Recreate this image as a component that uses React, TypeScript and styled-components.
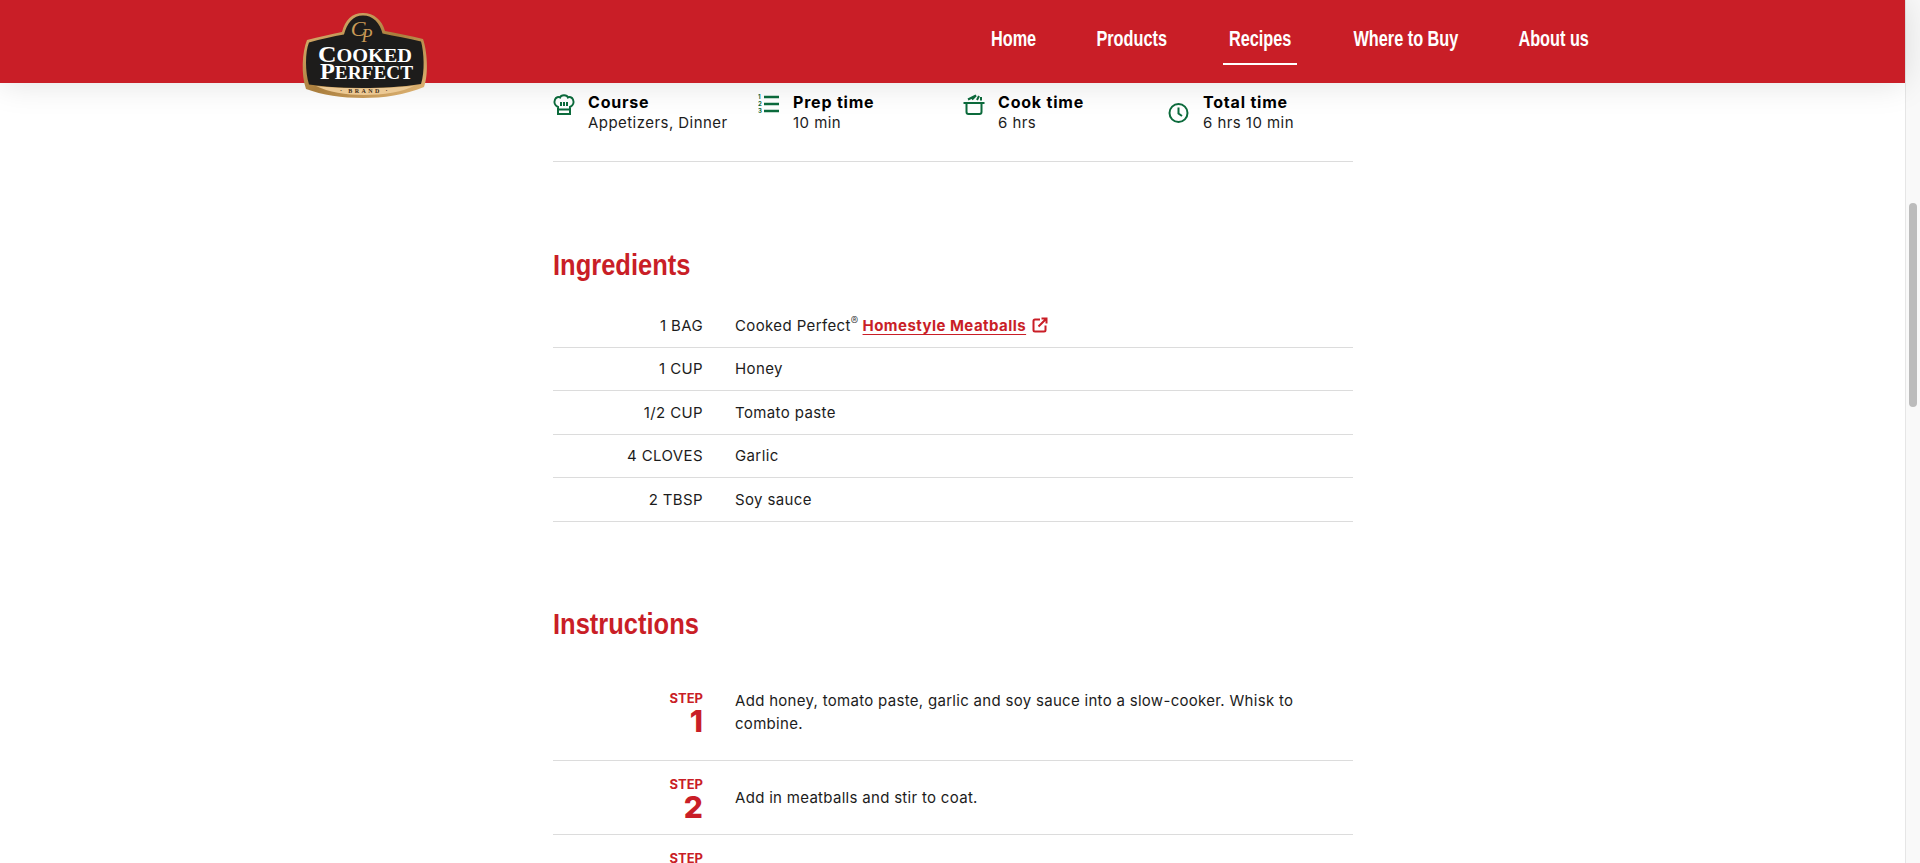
import styled, { createGlobalStyle } from "styled-components"

const RED = "#c91e27"
const GREEN = "#0c6b3c"
const LINE = "#dcdcdc"

const GlobalStyle = createGlobalStyle`
    html, body {
        margin: 0;
        height: 100%;
        overflow: hidden;
        background: #fff;
    }
    body {
        font-family: Inter, "Noto Sans", sans-serif;
        color: #1c1c1c;
    }
`

const Viewport = styled.div`
    display: flex;
    height: 863px;
    overflow: hidden;
`

const Page = styled.div`
    flex: 1;
    min-width: 0;
`

const ScrollTrack = styled.div`
    flex: none;
    width: 15px;
    box-sizing: border-box;
    background: #f9f9f9;
    border-left: 1px solid #e6e6e6;
    padding: 203px 3px 0;
`

const ScrollThumb = styled.div`
    width: 8px;
    height: 204px;
    border-radius: 4px;
    background: #bcbcbc;
`

const Header = styled.header`
    position: relative;
    z-index: 2;
    height: 83px;
    background: ${RED};
    box-shadow: 0 0 34px rgba(0, 0, 0, 0.13);
`

const Logo = styled.svg`
    position: absolute;
    left: 280px;
    top: 0;
    width: 180px;
    height: 110px;
`

const Nav = styled.nav`
    display: flex;
    justify-content: flex-end;
    gap: 50px;
    height: 100%;
    padding-right: 312px;
`

const NavLink = styled.a<{ $active?: boolean; $width: number }>`
    display: flex;
    align-items: center;
    justify-content: center;
    box-sizing: border-box;
    width: ${(p) => p.$width}px;
    height: 65px;
    padding-top: 15px;
    border-bottom: 2px solid ${(p) => (p.$active ? "#fff" : "transparent")};
    color: #fff;
    font-family: "Liberation Sans", sans-serif;
    font-size: 22px;
    font-weight: 700;
    white-space: nowrap;
`

const NavLabel = styled.span`
    display: block;
    flex: none;
    transform: scaleX(0.74);
`

const Content = styled.main`
    width: 800px;
    margin-left: 553px;
`

const InfoRow = styled.div`
    display: grid;
    grid-template-columns: repeat(4, 205px);
    height: 78px;
    border-bottom: 1px solid ${LINE};
`

const InfoItem = styled.div`
    display: flex;
    gap: 13px;
    padding-top: 9px;
`

const InfoIcon = styled.svg<{ $drop?: number }>`
    flex: none;
    width: 22px;
    height: 22px;
    margin-top: ${(p) => 1 + (p.$drop ?? 0)}px;
    fill: none;
    stroke: ${GREEN};
    stroke-width: 2;
`

const InfoTitle = styled.div`
    color: #000;
    font-size: 16px;
    font-weight: 700;
    line-height: 20px;
    letter-spacing: 0.8px;
`

const InfoValue = styled.div`
    font-size: 15px;
    line-height: 21px;
    letter-spacing: 0.45px;
`

const Heading = styled.h2`
    margin: 0;
    color: ${RED};
    font-family: "Liberation Sans", sans-serif;
    font-size: 30px;
    line-height: 40px;
    font-weight: 700;
    transform: scaleX(0.85);
    transform-origin: left center;
`

const IngredientsHeading = styled(Heading)`
    margin-top: 83px;
    margin-bottom: 19px;
`

const InstructionsHeading = styled(Heading)`
    margin-top: 82px;
    margin-bottom: 31px;
`

const IngredientRow = styled.div`
    display: grid;
    grid-template-columns: 150px 1fr;
    column-gap: 32px;
    align-items: center;
    height: 43.5px;
    box-sizing: border-box;
    border-bottom: 1px solid ${LINE};
    font-size: 15px;
    letter-spacing: 0.38px;
`

const Qty = styled.div`
    text-align: right;
`

const Reg = styled.sup`
    font-size: 11px;
    font-weight: 300;
    line-height: 0;
`

const ProductLink = styled.a`
    margin-left: 4px;
    color: ${RED};
    font-weight: 700;
    letter-spacing: 0.45px;
    text-decoration: underline;
    text-underline-offset: 3px;
`

const LinkIcon = styled.svg`
    width: 16px;
    height: 16px;
    margin-left: 6px;
    vertical-align: -2px;
    fill: none;
    stroke: ${RED};
    stroke-width: 2;
`

const StepRow = styled.div<{ $height: number; $textTop: number }>`
    display: grid;
    grid-template-columns: 150px 1fr;
    column-gap: 32px;
    height: ${(p) => p.$height}px;
    box-sizing: border-box;
    border-bottom: 1px solid ${LINE};
    padding-top: 14px;
    & > p {
        margin: ${(p) => p.$textTop}px 0 0;
    }
`

const StepLabel = styled.div`
    padding-top: 1px;
    text-align: right;
    color: ${RED};
    font-weight: 700;
`

const StepWord = styled.div`
    font-size: 13px;
    line-height: 16px;
`

const StepNum = styled.div`
    font-size: 30px;
    line-height: 30px;
    font-weight: 800;
`

const StepText = styled.p`
    font-size: 15px;
    line-height: 23px;
    letter-spacing: 0.3px;
`

const ingredients: [string, string][] = [
    ["1 CUP", "Honey"],
    ["1/2 CUP", "Tomato paste"],
    ["4 CLOVES", "Garlic"],
    ["2 TBSP", "Soy sauce"],
]

const navItems: [string, number][] = [
    ["Home", 55],
    ["Products", 82],
    ["Recipes", 74],
    ["Where to Buy", 117],
    ["About us", 79],
]

const App = (): React.JSX.Element => {
    return (
        <Viewport>
            <GlobalStyle />
            <Page>
                <Header>
                    <Nav>
                        {navItems.map(([label, width]) => (
                            <NavLink key={label} $width={width} $active={label === "Recipes"}>
                                <NavLabel>{label}</NavLabel>
                            </NavLink>
                        ))}
                    </Nav>
                    <Logo viewBox="0 0 180 110">
                        <defs>
                            <linearGradient id="gold" x1="0" y1="0" x2="1" y2="1">
                                <stop offset="0" stopColor="#e6bd7c" />
                                <stop offset="0.5" stopColor="#a97d3c" />
                                <stop offset="1" stopColor="#e3b878" />
                            </linearGradient>
                        </defs>
                        <path
                            d="M83 13C94 13 102 20 105 31C117 33 131 36 143 39C147 50 149 74 144 87C125 95 103 98 83 98C62 98 42 95 26 89C21 75 22 52 27 40C39 37 51 34 62 32C65 20 72 13 83 13Z"
                            fill="url(#gold)"
                        />
                        <path
                            d="M83 15.500C93 15.500 100 23 102.500 33.500C115 36 128 38.500 141 41.500C144 52 145 72 141 84C122 87 100 88 83 88C63 88 45 87 29 84.500C25 72 25 52 29 42.500C41 39 53 36.500 64 34.500C67 23 73 15.500 83 15.500Z"
                            fill="#1d1c1b"
                        />
                        <path
                            d="M36 86C62 89 104 89 134 86C122 92 104 95 84 95C66 95 48 92 36 86Z"
                            fill="#ecc994"
                        />
                        <text x="78" y="36" textAnchor="middle" fontFamily="Liberation Serif" fontStyle="italic" fontSize="22" fill="#c99a56">
                            C
                        </text>
                        <text x="87" y="42" textAnchor="middle" fontFamily="Liberation Serif" fontStyle="italic" fontSize="18" fill="#c99a56">
                            P
                        </text>
                        <text x="38" y="62" textLength="94" lengthAdjust="spacingAndGlyphs" fontFamily="Liberation Serif" fontWeight="700" fontSize="19" fill="#fff">
                            <tspan fontSize="24">C</tspan>OOKED
                        </text>
                        <text x="40" y="79" textLength="93" lengthAdjust="spacingAndGlyphs" fontFamily="Liberation Serif" fontWeight="700" fontSize="19" fill="#fff">
                            <tspan fontSize="24">P</tspan>ERFECT
                        </text>
                        <text x="85" y="93" textAnchor="middle" fontFamily="Liberation Serif" fontWeight="700" fontSize="6" letterSpacing="2.400" fill="#3a2a14">
                            · BRAND ·
                        </text>
                    </Logo>
                </Header>
                <Content>
                    <InfoRow>
                        <InfoItem>
                            <InfoIcon viewBox="0 0 22 22">
                                <path d="M5 14C1.500 12.500 1 9 2 6.500C3 4 5.500 3.500 7 4.500C8 1.500 14 1.500 15 4.500C16.500 3.500 19 4 20 6.500C21 9 20.500 12.500 17 14V21H5Z" />
                                <path d="M5 16.500H17M8 9V13M11 9V13M14 9V13" />
                            </InfoIcon>
                            <div>
                                <InfoTitle>Course</InfoTitle>
                                <InfoValue>Appetizers, Dinner</InfoValue>
                            </div>
                        </InfoItem>
                        <InfoItem>
                            <InfoIcon viewBox="0 0 22 22">
                                <path d="M6 4H21M6 11H21M6 18H21" strokeWidth="2.500" />
                                <text x="0" y="6" fontSize="6" fontWeight="700" fill={GREEN} stroke="none">1</text>
                                <text x="0" y="13" fontSize="6" fontWeight="700" fill={GREEN} stroke="none">2</text>
                                <text x="0" y="20" fontSize="6" fontWeight="700" fill={GREEN} stroke="none">3</text>
                            </InfoIcon>
                            <div>
                                <InfoTitle>Prep time</InfoTitle>
                                <InfoValue>10 min</InfoValue>
                            </div>
                        </InfoItem>
                        <InfoItem>
                            <InfoIcon viewBox="0 0 22 22">
                                <path d="M3.500 10H18.500V19C18.500 20 17.500 21 16.500 21H5.500C4.500 21 3.500 20 3.500 19ZM0.500 10H21.500" />
                                <path d="M5 6.500L13 2.500L9 6.500M14 7L16 3M18 7.500V4" />
                            </InfoIcon>
                            <div>
                                <InfoTitle>Cook time</InfoTitle>
                                <InfoValue>6 hrs</InfoValue>
                            </div>
                        </InfoItem>
                        <InfoItem>
                            <InfoIcon viewBox="0 0 22 22" $drop={9}>
                                <circle cx="10.500" cy="11" r="9" />
                                <path d="M10.500 5.500V11.500L14 14" />
                            </InfoIcon>
                            <div>
                                <InfoTitle>Total time</InfoTitle>
                                <InfoValue>6 hrs 10 min</InfoValue>
                            </div>
                        </InfoItem>
                    </InfoRow>

                    <IngredientsHeading>Ingredients</IngredientsHeading>
                    <IngredientRow>
                        <Qty>1 BAG</Qty>
                        <div>
                            Cooked Perfect<Reg>®</Reg>
                            <ProductLink>Homestyle Meatballs</ProductLink>
                            <LinkIcon viewBox="0 0 16 16">
                                <path d="M8 2.500H3C2 2.500 1.500 3 1.500 4V13C1.500 14 2 14.500 3 14.500H12C13 14.500 13.500 14 13.500 13V8.500M6.500 9.500L14.500 1.500M9.500 1.500H14.500V6.500" />
                            </LinkIcon>
                        </div>
                    </IngredientRow>
                    {ingredients.map(([qty, name]) => (
                        <IngredientRow key={name}>
                            <Qty>{qty}</Qty>
                            <div>{name}</div>
                        </IngredientRow>
                    ))}

                    <InstructionsHeading>Instructions</InstructionsHeading>
                    <StepRow $height={86} $textTop={0}>
                        <StepLabel>
                            <StepWord>STEP</StepWord>
                            <StepNum>1</StepNum>
                        </StepLabel>
                        <StepText>
                            Add honey, tomato paste, garlic and soy sauce into a slow-cooker. Whisk to combine.
                        </StepText>
                    </StepRow>
                    <StepRow $height={74} $textTop={11}>
                        <StepLabel>
                            <StepWord>STEP</StepWord>
                            <StepNum>2</StepNum>
                        </StepLabel>
                        <StepText>Add in meatballs and stir to coat.</StepText>
                    </StepRow>
                    <StepRow $height={73} $textTop={0}>
                        <StepLabel>
                            <StepWord>STEP</StepWord>
                        </StepLabel>
                    </StepRow>
                </Content>
            </Page>
            <ScrollTrack>
                <ScrollThumb />
            </ScrollTrack>
        </Viewport>
    )
}

export default App
